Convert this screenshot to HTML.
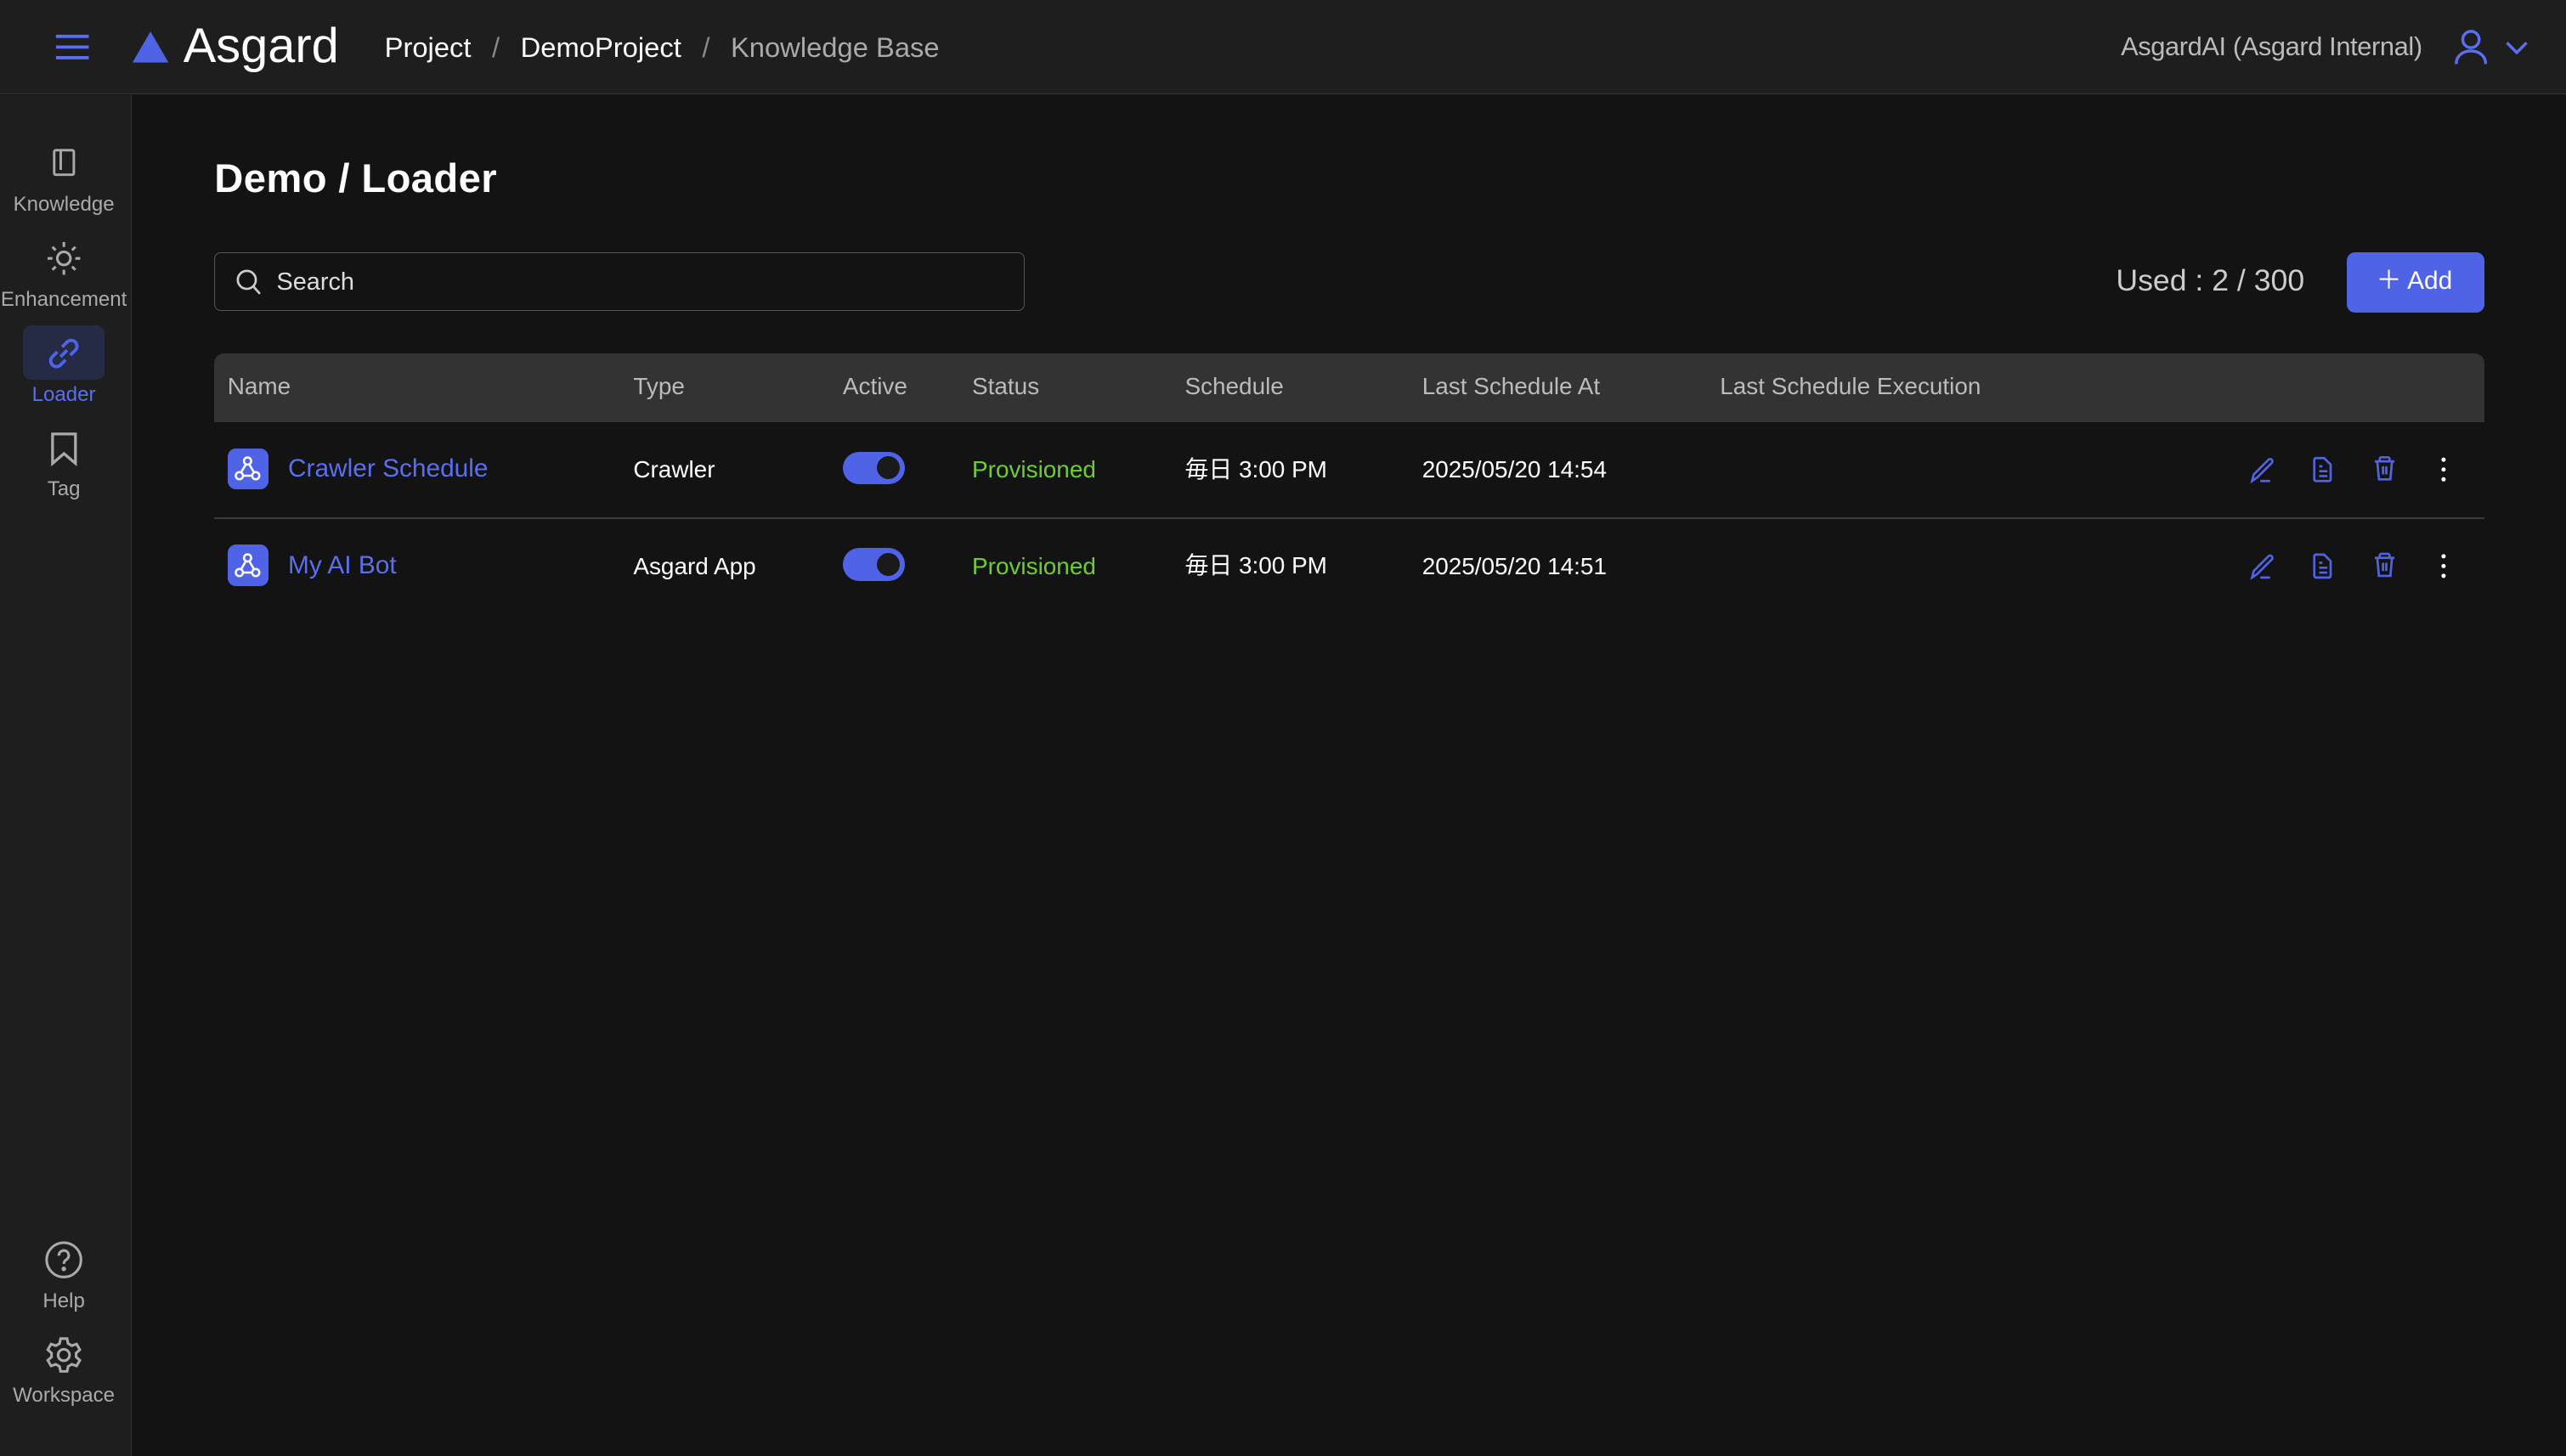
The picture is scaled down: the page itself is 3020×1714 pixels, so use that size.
<!DOCTYPE html>
<html><head><meta charset="utf-8"><style>
html,body{margin:0;padding:0;background:#131313;overflow:hidden}
body{width:3020px;height:1714px}
#z{zoom:1.92602;width:1568px;height:890px;position:relative;font-family:"Liberation Sans","Noto Sans CJK SC",sans-serif;color:#fff}
.a{position:absolute;line-height:1.15}
.hdr{left:0;top:0;width:1568px;height:57px;background:#1e1e1e;border-bottom:1px solid #333}
.side{left:0;top:58px;width:80px;height:832px;background:#1e1e1e;border-right:1px solid #333}
.si{position:absolute;left:-1px;width:80px;text-align:center;font-size:12.5px;color:#aaa}
.th{font-size:14.5px;color:#bbb;top:228px}
.cell{font-size:14.5px}
.tog{width:38px;height:20px;border-radius:10px;background:#4f63e6}
.tog:after{content:"";position:absolute;right:3px;top:3px;width:14px;height:14px;border-radius:50%;background:#1a1a1a}
</style></head><body><div id="z">
<div class="a hdr"></div>
<svg class="a" style="left:33px;top:20px" width="22" height="17"><g stroke="#5a6ff0" stroke-width="2"><line x1="1" y1="2" x2="21" y2="2"/><line x1="1" y1="8.5" x2="21" y2="8.5"/><line x1="1" y1="15" x2="21" y2="15"/></g></svg>
<svg class="a" style="left:80px;top:19px" width="24" height="20"><polygon points="12,0 23,19 1,19" fill="#4f63e6"/></svg>
<div class="a" style="left:112px;top:11px;font-size:30px">Asgard</div>
<div class="a" style="left:235px;top:19px;font-size:17px">Project <span style="color:#888;margin:0 8px">/</span> DemoProject <span style="color:#888;margin:0 8px">/</span> <span style="color:#aaa">Knowledge Base</span></div>
<div class="a" style="left:1296px;top:19px;font-size:16px;color:#bbb;letter-spacing:-0.2px">AsgardAI (Asgard Internal)</div>
<svg class="a" style="left:1498px;top:17px" width="50" height="24" fill="none" stroke="#5a6ff0" stroke-width="1.8"><circle cx="12" cy="7" r="5"/><path d="M3 22c0-5 4-8 9-8s9 3 9 8"/><path d="M34 9l6 6 6-6"/></svg>
<div class="a side"></div>
<svg class="a" style="left:30px;top:90px" width="18" height="20" fill="none" stroke="#aaa" stroke-width="1.5"><rect x="3" y="2" width="12" height="15" rx="1"/><line x1="7" y1="2" x2="7" y2="14"/></svg>
<div class="si" style="top:118px">Knowledge</div>
<svg class="a" style="left:28px;top:147px" width="22" height="22" fill="none" stroke="#aaa" stroke-width="1.6"><circle cx="11" cy="11" r="4"/><path d="M11 1v3M11 18v3M1 11h3M18 11h3M4 4l2 2M16 16l2 2M4 18l2-2M16 6l2-2"/></svg>
<div class="si" style="top:176px">Enhancement</div>
<div class="a" style="left:14px;top:199px;width:50px;height:33px;border-radius:5px;background:#262b45"></div>
<svg class="a" style="left:27px;top:204px" width="24" height="24" fill="none" stroke="#4f63e6" stroke-width="2"><path d="M10 14l4-4M8 11l-3 3a3.5 3.5 0 005 5l3-3M16 13l3-3a3.5 3.5 0 00-5-5l-3 3"/></svg>
<div class="si" style="top:234px;color:#5a6ff0">Loader</div>
<svg class="a" style="left:30px;top:263px" width="18" height="22" fill="none" stroke="#aaa" stroke-width="1.7"><path d="M2 2h14v18l-7-6-7 6z"/></svg>
<div class="si" style="top:292px">Tag</div>
<svg class="a" style="left:27px;top:758px" width="24" height="24" fill="none" stroke="#aaa" stroke-width="1.6"><circle cx="12" cy="12" r="10.5"/><path d="M9 9.5a3 3 0 115 2c-1 .8-2 1.3-2 3"/><circle cx="12" cy="17.5" r=".6" fill="#aaa"/></svg>
<div class="si" style="top:788px">Help</div>
<svg class="a" style="left:27px;top:816px" width="24" height="24" fill="none" stroke="#aaa" stroke-width="1.6"><circle cx="12" cy="12" r="3.5"/><path d="M10 2h4l.6 3 2.3 1.3 2.9-1 2 3.5-2.3 2v2.4l2.3 2-2 3.5-2.9-1-2.3 1.3L14 22h-4l-.6-3-2.3-1.3-2.9 1-2-3.5 2.3-2v-2.4l-2.3-2 2-3.5 2.9 1L9.4 5z"/></svg>
<div class="si" style="top:846px">Workspace</div>

<div class="a" style="left:131px;top:95px;font-size:24.5px;font-weight:bold;letter-spacing:0.2px">Demo / Loader</div>
<div class="a" style="left:131px;top:154px;width:494px;height:35px;border:1px solid #555;border-radius:4px"></div>
<svg class="a" style="left:144px;top:164px" width="16" height="17" fill="none" stroke="#ccc" stroke-width="1.4"><circle cx="7" cy="7" r="5.5"/><line x1="11" y1="11" x2="15" y2="15.5"/></svg>
<div class="a" style="left:169px;top:164px;font-size:15px;color:#ddd">Search</div>
<div class="a" style="left:1293px;top:161px;font-size:18.5px;color:#ccc">Used : 2 / 300</div>
<div class="a" style="left:1434px;top:154px;width:84px;height:37px;border-radius:5px;background:#4f63e6"></div>
<div class="a" style="left:1452px;top:163px;font-size:15.5px">＋ Add</div>

<div class="a" style="left:131px;top:216px;width:1387px;height:42px;background:#333;border-radius:6px 6px 0 0"></div>
<div class="a th" style="left:139px">Name</div><div class="a th" style="left:387px">Type</div><div class="a th" style="left:515px">Active</div><div class="a th" style="left:594px">Status</div><div class="a th" style="left:724px">Schedule</div><div class="a th" style="left:869px">Last Schedule At</div><div class="a th" style="left:1051px">Last Schedule Execution</div>
<div class="a" style="left:131px;top:316px;width:1387px;height:1px;background:#3a3a3a"></div>

<div class="a" style="left:139px;top:274px;width:25px;height:25px;border-radius:5px;background:#4f63e6"></div>
<svg class="a" style="left:143px;top:278px" width="17" height="17" fill="none" stroke="#fff" stroke-width="1.3"><circle cx="8.5" cy="4" r="2.2"/><circle cx="3.5" cy="13" r="2.2"/><circle cx="13.5" cy="13" r="2.2"/><path d="M7.5 6l-3 5M5.7 13h5.6M9.5 6l3 5"/></svg>
<div class="a cell" style="left:176px;top:278px;color:#5a6ff0;font-size:15.5px">Crawler Schedule</div>
<div class="a cell" style="left:387px;top:279px">Crawler</div>
<div class="a tog" style="left:515px;top:276px"></div>
<div class="a cell" style="left:594px;top:279px;color:#6ccf2e">Provisioned</div>
<div class="a cell" style="left:724px;top:277px;line-height:20px">毎日 3:00 PM</div>
<div class="a cell" style="left:869px;top:279px">2025/05/20 14:54</div>

<div class="a" style="left:139px;top:333px;width:25px;height:25px;border-radius:5px;background:#4f63e6"></div>
<svg class="a" style="left:143px;top:337px" width="17" height="17" fill="none" stroke="#fff" stroke-width="1.3"><circle cx="8.5" cy="4" r="2.2"/><circle cx="3.5" cy="13" r="2.2"/><circle cx="13.5" cy="13" r="2.2"/><path d="M7.5 6l-3 5M5.7 13h5.6M9.5 6l3 5"/></svg>
<div class="a cell" style="left:176px;top:337px;color:#5a6ff0;font-size:15.5px">My AI Bot</div>
<div class="a cell" style="left:387px;top:338px">Asgard App</div>
<div class="a tog" style="left:515px;top:335px"></div>
<div class="a cell" style="left:594px;top:338px;color:#6ccf2e">Provisioned</div>
<div class="a cell" style="left:724px;top:336px;line-height:20px">毎日 3:00 PM</div>
<div class="a cell" style="left:869px;top:338px">2025/05/20 14:51</div>

<svg class="a" style="left:1370px;top:270px" width="140" height="95" fill="none" stroke="#4f63e6" stroke-width="1.4">
<g id="r"><path d="M6 24l1-4 9-9a1.4 1.4 0 012 2l-9 9z M11 24h6"/>
<path d="M45 10h5l4 4v9a1 1 0 01-1 1h-8a1 1 0 01-1-1v-12a1 1 0 011-1z M47 15h2M47 18h5M47 21h5"/>
<path d="M81 12h12M84 12v-1.5a1 1 0 011-1h4a1 1 0 011 1V12M82.5 12l1 11h7l1-11M86 15v5M88 15v5"/>
<circle cx="123" cy="11" r="1.3" fill="#fff" stroke="none"/><circle cx="123" cy="17" r="1.3" fill="#fff" stroke="none"/><circle cx="123" cy="23" r="1.3" fill="#fff" stroke="none"/></g>
<use href="#r" y="59"/></svg>
</div></body></html>
